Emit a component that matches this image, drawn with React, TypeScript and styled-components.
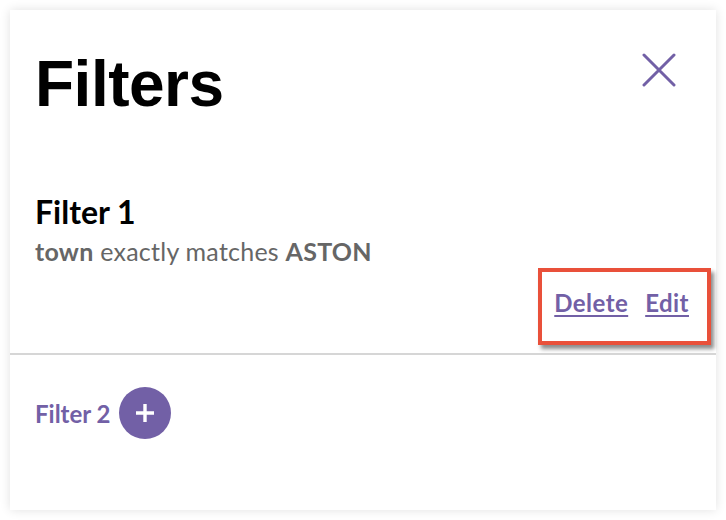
import React from 'react'
import styled, { createGlobalStyle } from 'styled-components'

const GlobalStyle = createGlobalStyle`
    body {
        margin: 0;
        background: #ffffff;
        font-family: Lato, "Noto Sans", sans-serif;
    }
`

export default function App() {
    return (
        <>
            <GlobalStyle />
            <Card>
                <Header>
                    <Title>Filters</Title>
                    <CloseButton aria-label="Close">
                        <svg width="34" height="34" viewBox="0 0 34 34">
                            <path
                                d="M2 2 L32 32 M32 2 L2 32"
                                stroke="#7260a6"
                                strokeWidth="3"
                                strokeLinecap="round"
                            />
                        </svg>
                    </CloseButton>
                </Header>
                <FilterSection>
                    <FilterName>Filter 1</FilterName>
                    <FilterRule>
                        <b>town</b> exactly matches <b>ASTON</b>
                    </FilterRule>
                    <Actions>
                        <Highlight>
                            <LinkButton>Delete</LinkButton>
                            <LinkButton>Edit</LinkButton>
                        </Highlight>
                    </Actions>
                </FilterSection>
                <AddRow>
                    <AddLabel>Filter 2</AddLabel>
                    <AddButton aria-label="Add filter">
                        <svg width="22" height="22" viewBox="0 0 22 22">
                            <path
                                d="M11 2 V20 M2 11 H20"
                                stroke="#ffffff"
                                strokeWidth="3.4"
                            />
                        </svg>
                    </AddButton>
                </AddRow>
            </Card>
        </>
    )
}

const Card = styled.div`
    margin: 10px;
    width: 706px;
    height: 500px;
    background: #fff;
    box-shadow: 0 0 10px rgba(0, 0, 0, 0.12);
    display: flex;
    flex-direction: column;
`

const Header = styled.div`
    display: flex;
    justify-content: space-between;
    align-items: flex-start;
    padding: 36px 40px 0 25px;
`

const Title = styled.h1`
    margin: 0;
    font-family: "Liberation Sans", Arial, sans-serif;
    font-size: 64px;
    font-weight: 700;
    line-height: 76px;
    color: #000;
    letter-spacing: -0.5px;
`

const CloseButton = styled.button`
    border: none;
    background: none;
    padding: 0;
    margin-top: 7px;
    cursor: pointer;
    display: flex;
`

const FilterSection = styled.div`
    padding: 0 5px 8px 25px;
    margin-top: 71px;
    border-bottom: 2px solid #d6d6d6;
    display: flex;
    flex-direction: column;
`

const FilterName = styled.div`
    font-size: 32px;
    font-weight: 700;
    color: #000;
    line-height: 38px;
`

const FilterRule = styled.div`
    margin-top: 5px;
    font-size: 25px;
    color: #666;
    line-height: 30px;
    letter-spacing: 0.25px;

    b {
        font-weight: 700;
    }
`

const Actions = styled.div`
    display: flex;
    justify-content: flex-end;
    margin-top: 2px;
`

const Highlight = styled.div`
    display: flex;
    gap: 17px;
    align-items: center;
    padding: 17px 18px 24px 12px;
    border: 4px solid #e9503a;
    box-shadow: 3px 4px 4px rgba(0, 0, 0, 0.45);
`

const LinkButton = styled.a`
    font-size: 24px;
    line-height: 28px;
    font-weight: 700;
    letter-spacing: 0.45px;
    color: #7260a6;
    text-decoration: underline;
    text-underline-offset: 3px;
    text-decoration-thickness: 2px;
    cursor: pointer;
`

const AddRow = styled.div`
    display: flex;
    align-items: center;
    gap: 9px;
    padding: 32px 0 0 25px;
`

const AddLabel = styled.span`
    font-size: 24px;
    font-weight: 700;
    color: #7260a6;
`

const AddButton = styled.button`
    width: 52px;
    height: 52px;
    border-radius: 50%;
    border: none;
    background: #7260a6;
    display: flex;
    align-items: center;
    justify-content: center;
    padding: 0;
    cursor: pointer;
`
